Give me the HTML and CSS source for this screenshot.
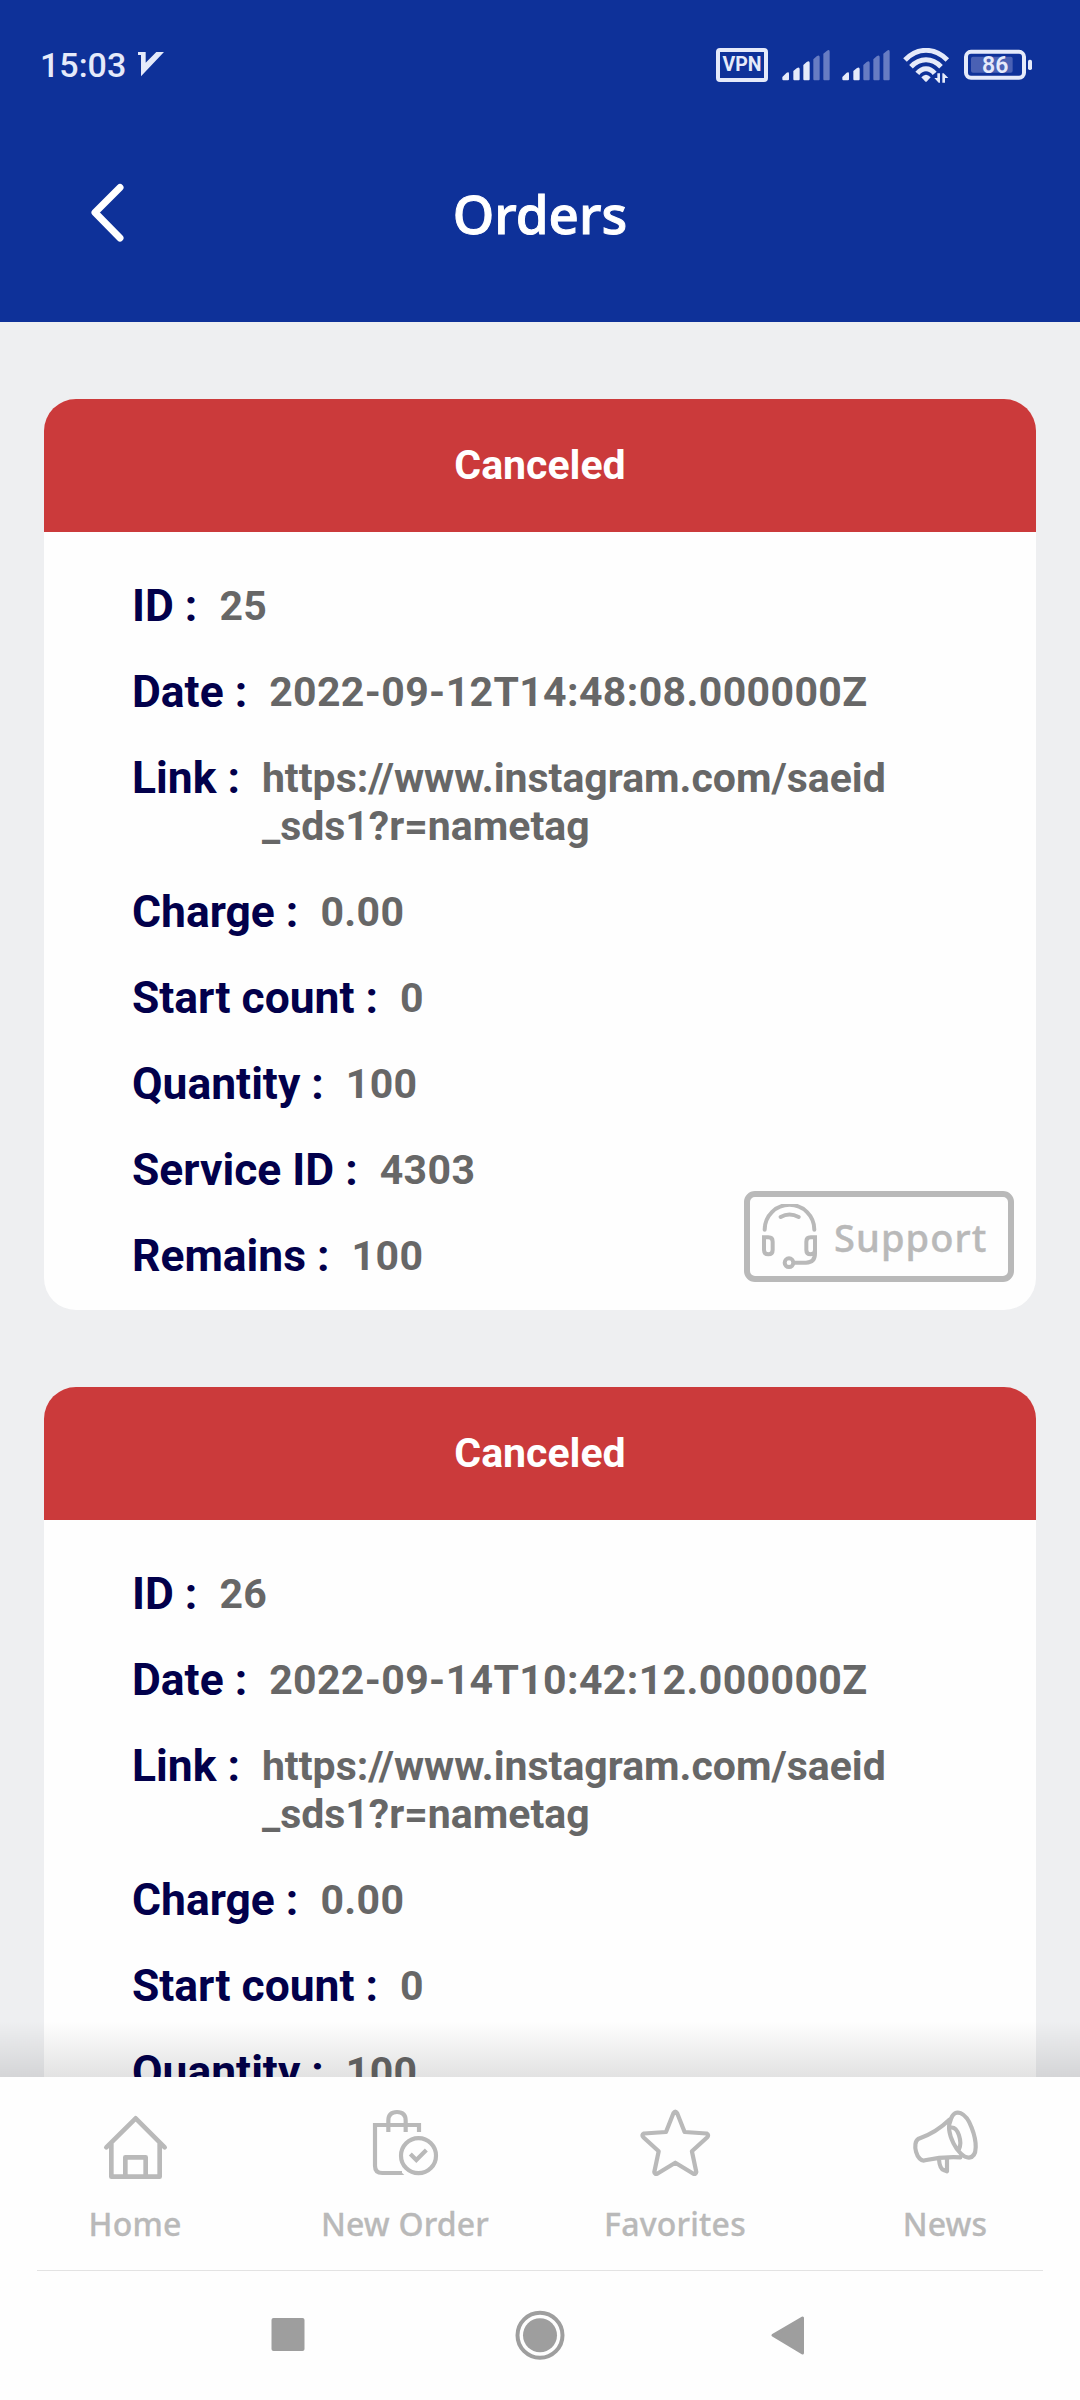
FILE: index.html
```html
<!DOCTYPE html>
<html lang="en">
<head>
<meta charset="utf-8">
<title>Orders</title>
<link rel="stylesheet" href="styles.css">
</head>
<body>
<div class="screen">
  <header class="header">
    <div class="status">
      <div class="status-left">
        <span class="clock">15:03</span>
        <svg class="v-icon" viewBox="53 24 78 73"><path d="M53 24H76V56L108 24H131L62 97V33H53Z"/></svg>
      </div>
      <div class="status-right">
        <span class="vpn">VPN</span>
        <svg class="signal" viewBox="6 22 144 102">
          <path d="M7 109L20 96Q27 92 27 99V116Q27 119 24 119H10Q7 119 7 116ZM40 91L50 83Q59 77 59 86V116Q59 119 56 119H43Q40 119 40 116ZM70 73L80 64Q89 58 89 67V116Q89 119 86 119H73Q70 119 70 116Z"/>
          <path class="dim" d="M100 56L110 47Q119 41 119 50V116Q119 119 116 119H103Q100 119 100 116ZM130 39L140 31Q149 24 149 33V116Q149 119 146 119H133Q130 119 130 116Z"/>
        </svg>
        <svg class="signal" viewBox="6 22 144 102">
          <path d="M7 109L20 96Q27 92 27 99V116Q27 119 24 119H10Q7 119 7 116ZM40 91L50 83Q59 77 59 86V116Q59 119 56 119H43Q40 119 40 116Z"/>
          <path class="dim" d="M70 73L80 64Q89 58 89 67V116Q89 119 86 119H73Q70 119 70 116ZM100 56L110 47Q119 41 119 50V116Q119 119 116 119H103Q100 119 100 116ZM130 39L140 31Q149 24 149 33V116Q149 119 146 119H133Q130 119 130 116Z"/>
        </svg>
        <svg class="wifi" viewBox="368 22 141 105">
          <path class="arc" d="M374 58Q402 29 437 29T501 58M392 78Q412 57 437 57T482 78M411 98Q422 84 437 84T463 98"/>
          <path d="M423 110Q437 95 451 110L440 122Q437 125 434 122Z"/>
          <path d="M471 98H479V126H475L462 112H471ZM486 126H494V112H504L490 98H486Z"/>
        </svg>
        <div class="battery">
          <svg viewBox="552 22 204 102">
            <rect class="level" x="573" y="48" width="125" height="48" rx="6"/>
            <rect class="case" x="558" y="33.500" width="174" height="78" rx="15"/>
            <rect x="744" y="57" width="12" height="31" rx="5"/>
          </svg>
          <span class="battery-text">86</span>
        </div>
      </div>
    </div>
    <div class="title-row">
      <svg class="back" viewBox="0 0 34 60"><path d="M29 4.500L4 29.500L29 55"/></svg>
      <h1 class="title">Orders</h1>
    </div>
  </header>

  <main class="list">
    <article class="card">
      <div class="card-status">Canceled</div>
      <div class="fields">
        <div class="row"><span class="label">ID :</span><span class="value">25</span></div>
        <div class="row"><span class="label">Date :</span><span class="value">2022-09-12T14:48:08.000000Z</span></div>
        <div class="row"><span class="label">Link :</span><span class="value url">https://www.instagram.com/saeid<br>_sds1?r=nametag</span></div>
        <div class="row"><span class="label">Charge :</span><span class="value">0.00</span></div>
        <div class="row"><span class="label">Start count :</span><span class="value">0</span></div>
        <div class="row"><span class="label">Quantity :</span><span class="value">100</span></div>
        <div class="row"><span class="label">Service ID :</span><span class="value">4303</span></div>
        <div class="row"><span class="label">Remains :</span><span class="value">100</span></div>
      </div>
      <div class="support">
        <svg viewBox="180 129 174 198">
          <path d="M194 206A74.500 74.500 0 0 1 343 206M242 168Q268 153 296 168"/>
          <path d="M192 229H205Q218 229 218 242V267Q218 280 205 280T192 267ZM345 229H332Q319 229 319 242V267Q319 280 332 280Q345 279 345 267ZM345 267V277Q345 305 318 305H284"/>
          <circle cx="267" cy="305" r="13"/>
        </svg>
        <span class="support-text">Support</span>
      </div>
    </article>
    <article class="card">
      <div class="card-status">Canceled</div>
      <div class="fields">
        <div class="row"><span class="label">ID :</span><span class="value">26</span></div>
        <div class="row"><span class="label">Date :</span><span class="value">2022-09-14T10:42:12.000000Z</span></div>
        <div class="row"><span class="label">Link :</span><span class="value url">https://www.instagram.com/saeid<br>_sds1?r=nametag</span></div>
        <div class="row"><span class="label">Charge :</span><span class="value">0.00</span></div>
        <div class="row"><span class="label">Start count :</span><span class="value">0</span></div>
        <div class="row"><span class="label">Quantity :</span><span class="value">100</span></div>
      </div>
    </article>
    <div class="fade"></div>
  </main>

  <nav class="tabs">
    <div class="tab">
      <svg viewBox="57 36 216 240"><path class="w13" d="M79 172L167 85L254 172M94 160V260H239V160M136 258V202H197V258"/></svg>
      <span class="tab-label">Home</span>
    </div>
    <div class="tab">
      <svg viewBox="867 36 216 240"><path class="w12 sharp" d="M1017 126V105H885V227Q885 249 907 249H966M925 126V92Q925 66 951 66T977 92V126"/><path class="solid" d="M960 243L973 255H955Z"/><circle class="w12" cx="1015.500" cy="197" r="52.500"/><path class="w12 sharp" d="M991 192L1009 210L1039 180"/></svg>
      <span class="tab-label">New Order</span>
    </div>
    <div class="tab">
      <svg viewBox="639 2102 72 80"><path d="M673.500 2113Q675.300 2110 677.100 2113L684.600 2132L706.500 2133.500Q709.500 2135 707 2137.500L691.900 2151.300L696.300 2172Q696 2174.800 693 2173.500L675.300 2162.700L657.600 2173.500Q654.600 2174.800 654.300 2172L658.700 2151.300L643.600 2137.500Q641 2135 644 2133.500L666 2132Z"/></svg>
      <span class="tab-label">Favorites</span>
    </div>
    <div class="tab">
      <svg viewBox="27 6 216 240"><path class="w12" d="M148 59Q108 98 56 116C34 128 51 188 75 181Q128 169 181 172M153 57C164 22 198 37 215 83C230 121 235 171 207 173C175 174 133 96 153 57ZM151 83C175 78 187 127 177 147M117 178Q119 206 131 210L141 214V177"/></svg>
      <span class="tab-label">News</span>
    </div>
  </nav>

  <footer class="sysnav">
    <svg viewBox="0 0 540 60">
      <rect x="1.500" y="13" width="33" height="33" rx="2"/>
      <circle cx="270" cy="30.300" r="17"/>
      <circle class="ring" cx="270" cy="30.300" r="22.500"/>
      <path d="M503 30.300L532.500 13V48Z" class="tri"/>
    </svg>
  </footer>
</div>
</body>
</html>
```
FILE: styles.css
```css
* { box-sizing: border-box; }

body {
  margin: 0;
  font-family: Roboto, sans-serif;
}

.screen {
  width: 1080px;
  height: 2400px;
  display: flex;
  flex-direction: column;
  overflow: hidden;
  background: #eeeff1;
}

.header {
  height: 322px;
  flex: none;
  background: #0e3199;
  color: #fff;
}

.status {
  height: 129px;
  padding: 0 48px 0 40px;
  display: flex;
  justify-content: space-between;
  align-items: center;
  color: #e5eafa;
}

.status svg { fill: #e5eafa; display: block; }
.status-left { display: flex; align-items: center; gap: 12px; }
.clock { font-size: 34px; line-height: 40px; font-weight: 500; padding-top: 1px; }
.v-icon { width: 26px; height: 24.3px; }
.status-right { display: flex; align-items: center; }

.vpn {
  width: 52px;
  height: 34px;
  margin-right: 14px;
  border: 4px solid #e5eafa;
  border-radius: 4px;
  font-size: 19.5px;
  font-weight: 700;
  line-height: 26px;
  text-align: center;
}

.signal { width: 48px; height: 34px; margin-right: 12px; }
.status .dim { fill: #677cc3; }
.wifi { width: 47px; height: 35px; margin: 1px 14px 0 1px; }
.status .arc { fill: none; stroke: #e5eafa; stroke-width: 15; }
.battery { display: grid; width: 68px; }
.battery svg, .battery-text { grid-area: 1 / 1; }
.battery svg { width: 68px; height: 34px; }
.status .level { fill: #4a61b4; }
.status .case { fill: none; stroke: #e5eafa; stroke-width: 12; }
.battery-text { font-size: 23px; font-weight: 600; line-height: 36px; height: 34px; padding-left: 18px; }

.title-row {
  display: grid;
  grid-template-columns: 1fr auto 1fr;
  align-items: center;
  padding: 0 91px;
  height: 168px;
}

.back { width: 34px; height: 60px; fill: none; stroke: #fff; stroke-width: 7; stroke-linecap: round; stroke-linejoin: round; }
.title {
  margin: 2px 0 0;
  font-family: "Noto Sans", sans-serif;
  font-size: 53px;
  font-weight: 500;
  line-height: 70px;
  -webkit-text-stroke: 1px #fff;
}

.list {
  flex: none;
  height: 1755px;
  padding: 77px 44px 0;
  display: grid;
  grid-template-rows: 911px 911px;
  row-gap: 77px;
  overflow: hidden;
  position: relative;
}

.card {
  position: relative;
  background: #fefefe;
  border-radius: 32px;
  overflow: hidden;
}

.card-status {
  height: 133px;
  background: #cb3a3b;
  color: #fff;
  font-size: 41px;
  font-weight: 700;
  line-height: 133px;
  text-align: center;
}

.fields {
  display: flex;
  flex-direction: column;
  gap: 35px;
  padding: 49px 0 0 88px;
}

.row { display: flex; align-items: flex-start; gap: 22px; height: 51px; }
.row:nth-child(3) { height: 99px; }
.label { font-size: 44.4px; font-weight: 700; line-height: 50px; color: #02004b; }
.value { padding-top: 1px; font-size: 41px; font-weight: 700; line-height: 48px; color: #676767; letter-spacing: 0.38px; }
.value.url { letter-spacing: 0; }

.support {
  position: absolute;
  right: 22px;
  bottom: 28px;
  width: 270px;
  height: 91px;
  border: 6px solid #b9b9b9;
  border-radius: 11px;
  display: flex;
  align-items: center;
  padding-left: 10px;
  gap: 16px;
}

.support svg { width: 58px; height: 66px; fill: none; stroke: #b9b9b9; stroke-width: 12; stroke-linecap: round; }
.support-text {
  font-family: "Noto Sans", sans-serif;
  font-size: 38px;
  font-weight: 500;
  line-height: 50px;
  color: #b9b9b9;
  letter-spacing: 1.1px;
  -webkit-text-stroke: 0.4px #b9b9b9;
}

.fade {
  position: absolute;
  left: 0;
  right: 0;
  bottom: 0;
  height: 56px;
  background: linear-gradient(rgba(0, 0, 0, 0), rgba(0, 0, 0, 0.11));
}

.tabs {
  flex: none;
  height: 194px;
  margin: 0;
  display: grid;
  grid-template-columns: repeat(4, 270px);
  background:
    linear-gradient(#e3e3e3, #e3e3e3) 37px 193px / 1006px 1px no-repeat,
    #fefefe;
}

.tab { display: flex; flex-direction: column; align-items: center; padding-top: 25px; }
.tab svg { width: 72px; height: 80px; fill: none; stroke: #b9b9b9; stroke-width: 4.2; stroke-linecap: round; stroke-linejoin: round; }
.tab .w13 { stroke-width: 14; }
.tab .w12 { stroke-width: 12.5; }
.tab .sharp { stroke-linecap: butt; stroke-linejoin: miter; }
.tab .solid { fill: #b9b9b9; stroke: none; }
.tab-label {
  margin-top: 19px;
  font-family: "Noto Sans", sans-serif;
  font-size: 32px;
  font-weight: 500;
  line-height: 46px;
  color: #b9b9b9;
  letter-spacing: 0.2px;
  -webkit-text-stroke: 0.3px #b9b9b9;
}

.sysnav { flex: 1; background: #fefefe; padding: 34px 270px 0; }
.sysnav svg { display: block; width: 540px; height: 60px; fill: #9e9e9e; }
.sysnav .ring { fill: none; stroke: #9e9e9e; stroke-width: 4; }
.sysnav .tri { stroke: #9e9e9e; stroke-width: 3; stroke-linejoin: round; }
```
